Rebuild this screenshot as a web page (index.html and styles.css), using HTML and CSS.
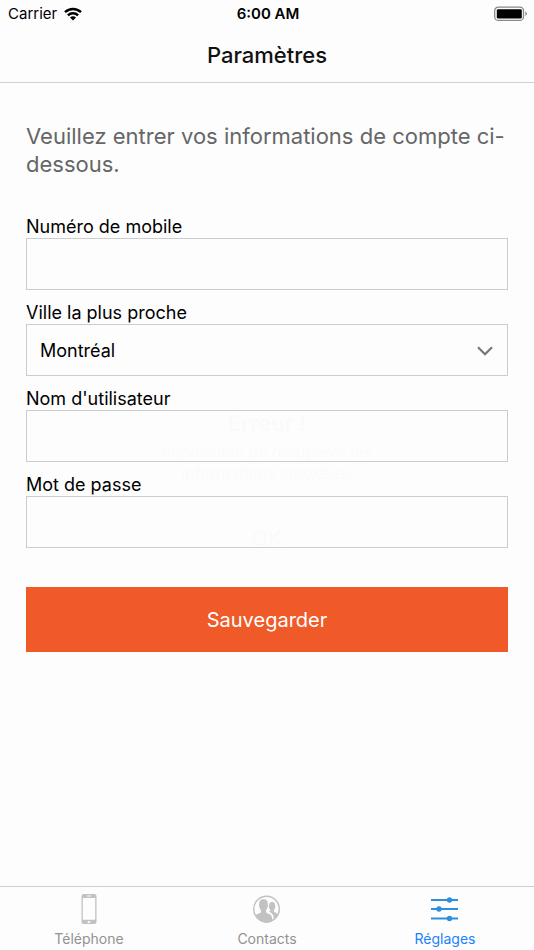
FILE: index.html
```html
<!DOCTYPE html>
<html lang="fr">
<head>
<meta charset="utf-8">
<meta name="viewport" content="width=device-width, initial-scale=1">
<title>Paramètres</title>
<link rel="stylesheet" href="styles.css">
</head>
<body>
<div class="status">
  <div class="carrier">
    <span>Carrier</span>
    <svg class="wifi" viewBox="0 0 18 14" aria-hidden="true">
      <path d="M1 5.200a11.500 11.500 0 0 1 16 0M3.900 8.300a7.300 7.300 0 0 1 10.200 0" fill="none" stroke="#000" stroke-width="2.500"/>
      <path d="M9 13.600 6 10.500a4.200 4.200 0 0 1 6 0z"/>
    </svg>
  </div>
  <time class="clock">6:00 AM</time>
  <svg class="battery" viewBox="0 0 34 16" aria-hidden="true">
    <rect x=".7" y="1.200" width="28.800" height="13.200" rx="3.500" fill="none" stroke="#888" stroke-width="1.300"/>
    <rect x="2.800" y="3.200" width="25" height="9.300" rx="1.200"/>
    <path d="M31.400 5.300q3 2.400 0 4.800z" fill="#888"/>
  </svg>
</div>
<header class="header"><h1 class="title">Paramètres</h1></header>
<main class="main">
  <p class="intro">Veuillez entrer vos informations de compte ci-dessous.</p>
  <form class="form">
    <div class="field">
      <label for="mobile">Numéro de mobile</label>
      <input class="control" id="mobile" type="tel">
    </div>
    <div class="field">
      <label for="city">Ville la plus proche</label>
      <div class="picker">
        <select class="control" id="city"><option>Montréal</option></select>
        <svg class="chevron" viewBox="0 0 16 10" aria-hidden="true"><path d="m1 1.200 7 7 7-7" fill="none" stroke="#777" stroke-width="2.200"/></svg>
      </div>
    </div>
    <div class="field">
      <label for="user">Nom d'utilisateur</label>
      <input class="control" id="user" type="text">
    </div>
    <div class="field">
      <label for="password">Mot de passe</label>
      <input class="control" id="password" type="password">
    </div>
    <button class="save" type="button">Sauvegarder</button>
  </form>
</main>
<nav class="tabs">
  <a class="tab" href="#telephone">
    <svg class="icon" viewBox="0 0 32 32" aria-hidden="true">
      <path fill="#c2c2c2" fill-rule="evenodd" d="M10.500 1h11a2 2 0 0 1 2 2v26a2 2 0 0 1-2 2h-11a2 2 0 0 1-2-2V3a2 2 0 0 1 2-2zM9.800 5v21.800h12.400V5zM14 2.600v.9h4v-.9zM14.600 28.900a1.400 1 0 1 0 2.800 0a1.400 1 0 1 0-2.800 0z"/>
    </svg>
    <span>Téléphone</span>
  </a>
  <a class="tab" href="#contacts">
    <svg class="icon" viewBox="0 0 32 32" aria-hidden="true">
      <circle cx="15.500" cy="16" r="12.800" fill="none" stroke="#c2c2c2" stroke-width="1.500"/>
      <path fill="#c2c2c2" d="M4.400 22.300c1.600-1.600 5-1.700 5.500-3v-2.100c-.9-.9-1.100-1.900-1.300-3-.9-.6-1-2.300-.3-2.800-.3-3.600 1.200-5.100 4.200-5.100s4.500 1.500 4.200 5.100c.7.500.6 2.200-.3 2.800-.2 1.100-.4 2.100-1.300 3v2.100c.9 1.600 4.600 1.500 5.600 4.100.6 1.600.6 3.700.4 5.400-7 3-13.900-.3-16.700-6.500z"/>
      <path fill="#c2c2c2" d="M17.800 18.500c1.200-.1 1.700-.6 1.900-1.200-.9-.6-1.200-1.400-1.400-2.400-.6-.4-.7-1.600-.2-2-.2-2.600 1-4 3-4s3.300 1.400 3 4c.5.400.5 1.600-.1 2-.2 1-.5 1.800-1.200 2.400v1.300c.8 1.100 3.500 1 4.200 3.200-.9 2.200-2.200 3.900-4.100 5.200.1-4.500-1.100-6.700-5.100-8.500z"/>
    </svg>
    <span>Contacts</span>
  </a>
  <a class="tab active" href="#reglages" aria-current="page">
    <svg class="icon" viewBox="0 0 32 32" aria-hidden="true">
      <path d="M2 7h27M2 16h27M2 25.500h27" stroke="#2e90dc" stroke-width="2"/>
      <g fill="#2e90dc"><circle cx="20.500" cy="7" r="2.700"/><circle cx="10" cy="16" r="2.700"/><circle cx="20.500" cy="25.500" r="2.700"/></g>
    </svg>
    <span>Réglages</span>
  </a>
</nav>
<div class="alert-layer">
  <div class="alert" role="alertdialog">
    <h2 class="alert-title">Erreur !</h2>
    <p class="alert-text">Impossible de récupérer les informations stockées.</p>
    <div class="alert-action">OK</div>
  </div>
</div>
</body>
</html>
```
FILE: styles.css
```css
* {
  box-sizing: border-box;
}

body {
  margin: 0;
  min-height: 100vh;
  display: flex;
  flex-direction: column;
  background: #fdfdfd;
  color: #000;
  font-family: Inter, "Liberation Sans", sans-serif;
  font-size: 18px;
}

.status {
  display: grid;
  grid-template-columns: 1fr auto 1fr;
  align-items: center;
  height: 27px;
  padding: 0 6px 0 8px;
  font-size: 15px;
}

.carrier {
  display: flex;
  align-items: center;
  gap: 7px;
}

.wifi {
  width: 18px;
  height: 14px;
}

.clock {
  font-weight: 600;
}

.battery {
  justify-self: end;
  width: 34px;
  height: 16px;
}

.header {
  height: 56px;
  display: flex;
  align-items: center;
  justify-content: center;
  border-bottom: 1px solid #d0d0d0;
}

.title {
  margin: 0;
  font-size: 22px;
  line-height: 28px;
  font-weight: 500;
  color: #111;
}

.main {
  flex: 1;
  padding: 39px 26px;
}

.intro {
  margin: 0 0 38px;
  font-size: 22px;
  line-height: 28px;
  color: #666;
}

.form {
  display: flex;
  flex-direction: column;
  gap: 12px;
}

.field {
  display: flex;
  flex-direction: column;
}

.field label {
  line-height: 22px;
}

.control {
  display: block;
  width: 100%;
  height: 52px;
  padding: 0 13px;
  border: 1px solid #ccc;
  border-radius: 0;
  background: transparent;
  color: #000;
  font: inherit;
  appearance: none;
}

.picker {
  position: relative;
}

.chevron {
  position: absolute;
  right: 15px;
  top: 22px;
  width: 16px;
  height: 10px;
  pointer-events: none;
}

.save {
  height: 65px;
  margin-top: 27px;
  border: 0;
  background: #f05a28;
  color: #fff;
  font: inherit;
  font-size: 20px;
}

.tabs {
  display: flex;
  height: 64px;
  border-top: 1px solid #d0d0d0;
}

.tab {
  flex: 1;
  display: flex;
  flex-direction: column;
  align-items: center;
  gap: 4px;
  padding-top: 6px;
  color: #929292;
  font-size: 14px;
  line-height: 20px;
  text-decoration: none;
}

.active {
  color: #1a82fb;
}

.icon {
  width: 32px;
  height: 32px;
}

.alert-layer {
  position: fixed;
  inset: 0;
  display: flex;
  align-items: center;
  justify-content: center;
  padding-top: 12px;
  opacity: 0.01;
  pointer-events: none;
}

.alert {
  width: 270px;
  text-align: center;
}

.alert-title {
  margin: 0 0 6px;
  font-size: 22px;
  line-height: 26px;
  font-weight: 600;
}

.alert-text {
  margin: 0;
  font-size: 16px;
  line-height: 21px;
}

.alert-action {
  margin-top: 40px;
  font-size: 22px;
  line-height: 28px;
}
```
